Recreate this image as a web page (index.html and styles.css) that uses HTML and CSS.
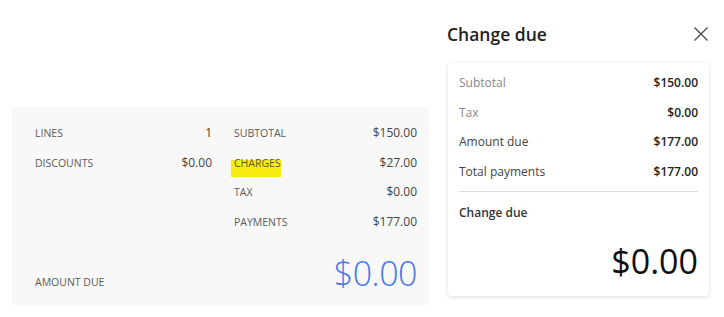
FILE: index.html
```html
<!DOCTYPE html>
<html lang="en">

<head>
    <meta charset="UTF-8">
    <title>Change due</title>
    <link rel="stylesheet" href="styles.css">
</head>

<body>
    <div class="page">
        <!-- Totals panel -->
        <div class="totals">
            <div class="totals-grid">
                <div class="col col-left">
                    <div class="row"><span class="label">Lines</span><span class="value">1</span></div>
                    <div class="row"><span class="label">Discounts</span><span class="value">$0.00</span></div>
                </div>
                <div class="col col-right">
                    <div class="row"><span class="label">Subtotal</span><span class="value">$150.00</span></div>
                    <div class="row"><span class="label"><span class="highlight">Charges</span></span><span class="value">$27.00</span></div>
                    <div class="row"><span class="label">Tax</span><span class="value">$0.00</span></div>
                    <div class="row"><span class="label">Payments</span><span class="value">$177.00</span></div>
                </div>
            </div>
            <div class="amount-row">
                <span class="label">Amount due</span>
                <span class="amount">$0.00</span>
            </div>
        </div>

        <!-- Change due dialog -->
        <div class="dialog">
            <div class="dialog-header">
                <h2>Change due</h2>
                <button class="close" aria-label="Close">
                    <svg width="16" height="16" viewBox="0 0 16 16">
                        <path d="M1.5 1.5 L14.5 14.5 M14.5 1.5 L1.5 14.5" stroke="#4a4a4a" stroke-width="1.3" fill="none"/>
                    </svg>
                </button>
            </div>
            <div class="card">
                <div class="line muted"><span>Subtotal</span><b>$150.00</b></div>
                <div class="line muted"><span>Tax</span><b>$0.00</b></div>
                <div class="line"><span>Amount due</span><b>$177.00</b></div>
                <div class="line"><span>Total payments</span><b>$177.00</b></div>
                <div class="divider"></div>
                <div class="change-label">Change due</div>
                <div class="change-amount">$0.00</div>
            </div>
        </div>
    </div>
</body>

</html>
```

FILE: styles.css
```css
body {
    margin: 0;
    font-family: "Open Sans", "Liberation Sans", sans-serif;
    background-color: #fff;
    color: #333;
}

.page {
    display: flex;
    align-items: flex-start;
}

/* left totals panel */
.totals {
    margin-top: 107px;
    margin-left: 12px;
    width: 417px;
    box-sizing: border-box;
    padding: 11px 12px 12px 23px;
    background-color: #f8f8f8;
}

.totals-grid {
    display: flex;
    gap: 22px;
}

.col-left {
    width: 177px;
}

.col-right {
    width: 183px;
}

.row {
    display: flex;
    justify-content: space-between;
    align-items: baseline;
    height: 29.7px;
    line-height: 16px;
    padding-top: 7px;
    box-sizing: border-box;
}

.label {
    font-size: 10.5px;
    text-transform: uppercase;
    color: #5a5a5a;
}

.value {
    font-size: 12px;
    color: #444;
}

.highlight {
    background: linear-gradient(transparent 4px, #f6ec12 4px);
    padding: 0 0 7px 3px;
    margin-left: -3px;
    color: #5c5a20;
}

.amount-row {
    display: flex;
    justify-content: space-between;
    align-items: baseline;
    margin-top: 16px;
}

.amount {
    font-size: 34px;
    font-weight: 300;
    line-height: 40px;
    letter-spacing: -0.5px;
    color: #4577ea;
}

/* change due dialog */
.dialog {
    margin-left: 19px;
    width: 261px;
    padding-top: 22px;
}

.dialog-header {
    display: flex;
    justify-content: space-between;
    align-items: center;
    height: 24px;
}

.dialog-header h2 {
    margin: 0 0 0 -1px;
    font-size: 17.5px;
    font-weight: 600;
    color: #222;
}

.close {
    border: none;
    background: none;
    padding: 0;
    width: 16px;
    height: 16px;
    cursor: pointer;
}

.card {
    margin-top: 17px;
    padding: 5px 11px 15px 11px;
    background-color: #fff;
    border-radius: 4px;
    box-shadow: 0 1px 4px rgba(0, 0, 0, 0.14);
}

.line {
    display: flex;
    justify-content: space-between;
    align-items: baseline;
    height: 29.5px;
    line-height: 29.5px;
    font-size: 12px;
    color: #444;
}

.line b {
    font-weight: 600;
    color: #222;
}

.line.muted span {
    color: #888;
}

.divider {
    margin-top: 5px;
    border-top: 1px solid #ddd;
}

.change-label {
    margin-top: 12px;
    font-size: 12px;
    line-height: 17px;
    font-weight: 600;
    color: #333;
}

.change-amount {
    margin-top: 20px;
    text-align: right;
    font-size: 34px;
    line-height: 40px;
    color: #111;
}
```
